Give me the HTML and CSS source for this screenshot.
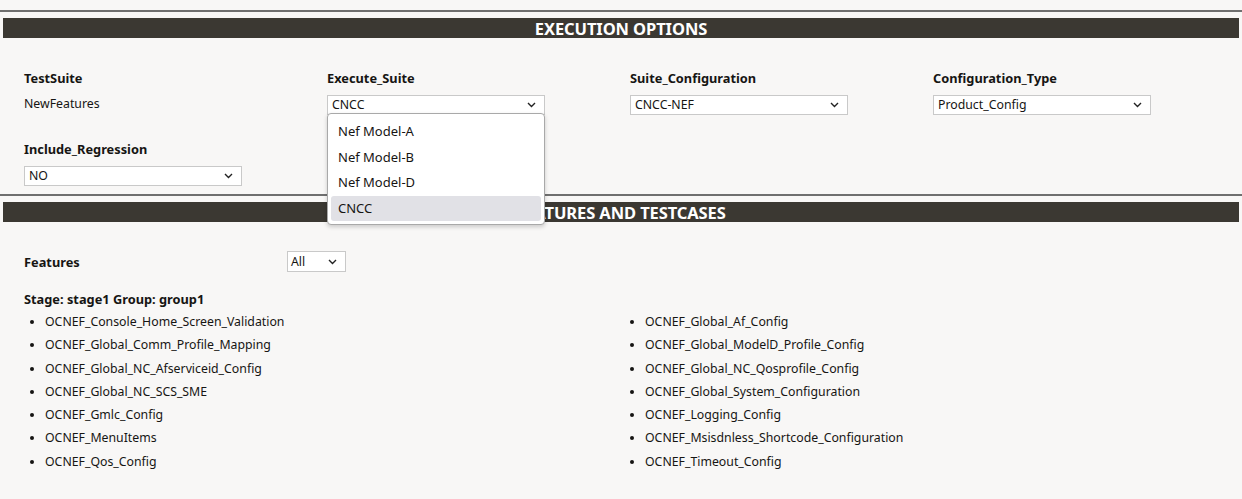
FILE: index.html
```html
<!DOCTYPE html>
<html lang="en">
<head>
    <meta charset="UTF-8">
    <meta name="viewport" content="width=device-width, initial-scale=1.0">
    <title>Execution Options</title>
    <link rel="stylesheet" href="styles.css">
</head>
<body>
    <div class="rule"></div>
    <div class="section-title">EXECUTION OPTIONS</div>

    <div class="options">
        <div class="field">
            <div class="label">TestSuite</div>
            <div class="value">NewFeatures</div>
        </div>
        <div class="field">
            <div class="label">Execute_Suite</div>
            <div class="select-wrap">
                <div class="select">
                    <span>CNCC</span>
                    <svg class="chevron" width="9" height="6" viewBox="0 0 9 6"><path d="M1 1 L4.5 4.5 L8 1" fill="none" stroke="#222" stroke-width="1.4"/></svg>
                </div>
                <div class="menu">
                    <div class="menu-item">Nef Model-A</div>
                    <div class="menu-item">Nef Model-B</div>
                    <div class="menu-item">Nef Model-D</div>
                    <div class="menu-item selected">CNCC</div>
                </div>
            </div>
        </div>
        <div class="field">
            <div class="label">Suite_Configuration</div>
            <div class="select">
                <span>CNCC-NEF</span>
                <svg class="chevron" width="9" height="6" viewBox="0 0 9 6"><path d="M1 1 L4.5 4.5 L8 1" fill="none" stroke="#222" stroke-width="1.4"/></svg>
            </div>
        </div>
        <div class="field">
            <div class="label">Configuration_Type</div>
            <div class="select">
                <span>Product_Config</span>
                <svg class="chevron" width="9" height="6" viewBox="0 0 9 6"><path d="M1 1 L4.5 4.5 L8 1" fill="none" stroke="#222" stroke-width="1.4"/></svg>
            </div>
        </div>
        <div class="field">
            <div class="label">Include_Regression</div>
            <div class="select">
                <span>NO</span>
                <svg class="chevron" width="9" height="6" viewBox="0 0 9 6"><path d="M1 1 L4.5 4.5 L8 1" fill="none" stroke="#222" stroke-width="1.4"/></svg>
            </div>
        </div>
    </div>

    <div class="rule"></div>
    <div class="section-title">FEATURES AND TESTCASES</div>

    <div class="features">
        <div class="features-row">
            <div class="label features-label">Features</div>
            <div class="select select-small">
                <span>All</span>
                <svg class="chevron" width="9" height="6" viewBox="0 0 9 6"><path d="M1 1 L4.5 4.5 L8 1" fill="none" stroke="#222" stroke-width="1.4"/></svg>
            </div>
        </div>
        <div class="label stage">Stage: stage1 Group: group1</div>
        <ul class="testcases">
            <li>OCNEF_Console_Home_Screen_Validation</li>
            <li>OCNEF_Global_Af_Config</li>
            <li>OCNEF_Global_Comm_Profile_Mapping</li>
            <li>OCNEF_Global_ModelD_Profile_Config</li>
            <li>OCNEF_Global_NC_Afserviceid_Config</li>
            <li>OCNEF_Global_NC_Qosprofile_Config</li>
            <li>OCNEF_Global_NC_SCS_SME</li>
            <li>OCNEF_Global_System_Configuration</li>
            <li>OCNEF_Gmlc_Config</li>
            <li>OCNEF_Logging_Config</li>
            <li>OCNEF_MenuItems</li>
            <li>OCNEF_Msisdnless_Shortcode_Configuration</li>
            <li>OCNEF_Qos_Config</li>
            <li>OCNEF_Timeout_Config</li>
        </ul>
    </div>
</body>
</html>
```

FILE: styles.css
```css
body {
    margin: 0;
    padding: 10px 0 0 0;
    background: #f8f7f6;
    font-family: 'Noto Sans', 'Open Sans', sans-serif;
    font-size: 12.3px;
    color: #161513;
}

.rule {
    border-top: 2px solid #6f6f6f;
    margin-bottom: 6px;
}

.section-title {
    margin: 0 3px;
    height: 20px;
    line-height: 21px;
    background: #3b3832;
    color: #fff;
    text-align: center;
    font-weight: bold;
    font-size: 16.5px;
    letter-spacing: -0.1px;
}

.options {
    display: grid;
    grid-template-columns: repeat(4, 303px);
    row-gap: 25px;
    padding: 31px 24px 8px 24px;
}

.label {
    font-weight: bold;
    font-size: 12.8px;
    line-height: 18px;
}

.field .label {
    margin-bottom: 8px;
}

.value {
    line-height: 18px;
}

.select-wrap {
    position: relative;
    width: 218px;
}

.select {
    box-sizing: border-box;
    width: 218px;
    height: 20px;
    border: 1px solid #c9c9c9;
    background: #fff;
    display: flex;
    align-items: center;
    justify-content: space-between;
    padding: 0 8px 0 4px;
    line-height: 18px;
}

.chevron {
    flex: none;
}

.menu {
    position: absolute;
    top: 18px;
    left: 0;
    width: 218px;
    box-sizing: border-box;
    background: #fff;
    border: 1px solid #a9a9a9;
    border-radius: 4px;
    box-shadow: 0 2px 4px rgba(0, 0, 0, 0.18);
    padding: 5px 3px 3px 3px;
    z-index: 10;
}

.menu-item {
    height: 25.5px;
    line-height: 25.5px;
    padding-left: 7px;
    font-size: 13px;
    border-radius: 3px;
}

.menu-item.selected {
    background: #e1e1e6;
}

.features {
    padding: 29px 24px 0 24px;
}

.features-row {
    display: flex;
    align-items: center;
}

.features-label {
    width: 263px;
}

.select-small {
    width: 59px;
    height: 21px;
    padding-left: 3px;
}

.stage {
    margin-top: 18px;
}

.testcases {
    list-style: disc;
    margin: 2px 0 0 0;
    padding: 0 0 0 21px;
    display: grid;
    grid-template-columns: 600px 600px;
}

.testcases li {
    line-height: 23.3px;
}
```
